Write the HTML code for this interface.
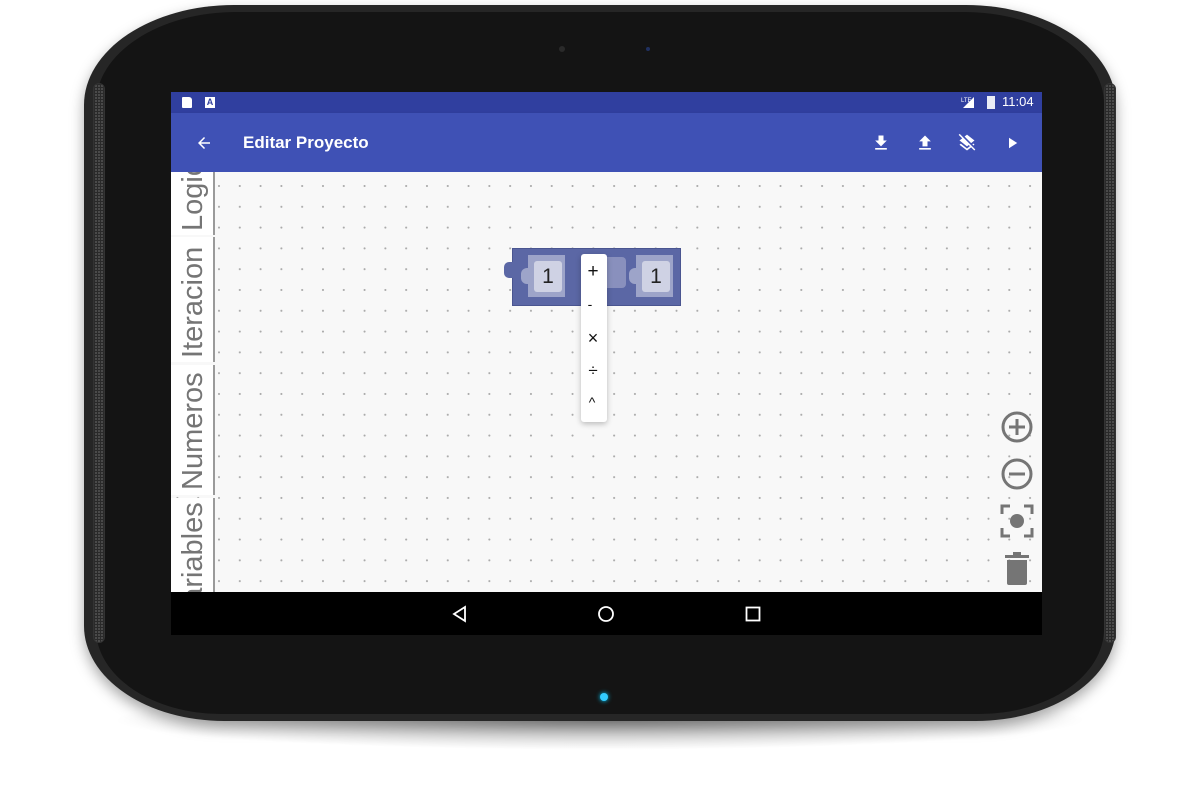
<!DOCTYPE html>
<html><head><meta charset="utf-8"><style>
*{margin:0;padding:0;box-sizing:border-box}
body{width:1200px;height:797px;background:#fff;position:relative;overflow:hidden;font-family:"Liberation Sans",sans-serif}
.abs{position:absolute}
.shadow{left:110px;top:690px;width:980px;height:60px;border-radius:50%;background:radial-gradient(ellipse at center,rgba(0,0,0,.35),rgba(0,0,0,0) 70%)}
.outer{left:84px;top:5px;width:1032px;height:716px;border-radius:150px 150px 140px 140px/100px 100px 95px 95px;background:#262626;box-shadow:0 6px 14px rgba(0,0,0,.35)}
.inner{left:96px;top:12px;width:1008px;height:702px;border-radius:140px 140px 125px 125px/92px 92px 85px 85px;background:#141414}
.spk{width:12px;top:83px;height:560px;border-radius:6px;background:repeating-radial-gradient(circle at 2px 2px,#555 0 1px,#2a2a2a 1px 3px);background-size:3px 3px;border:1px solid #333}
.screen{left:171px;top:92px;width:871px;height:543px;background:#000;overflow:hidden}
.status{left:0;top:0;width:871px;height:21px;background:#303f9f}
.bar{left:0;top:21px;width:871px;height:59px;background:#3f51b5;box-shadow:0 2px 3px rgba(0,0,0,.25)}
.canvas{left:0;top:80px;width:871px;height:420px;background-color:#f8f8f8;background-image:radial-gradient(circle,#aaa 0.8px,transparent 1.2px);background-size:20.8px 20.8px;background-position:37.6px 3.6px;overflow:hidden}
.tab{left:0;width:44px;background:#fff;border-right:2px solid #9a9a9a;overflow:hidden}
.tab span{position:absolute;left:7px;transform-origin:0 0;transform:rotate(-90deg);font-size:29px;line-height:30px;color:#757575;white-space:nowrap}
.nav{left:0;top:500px;width:871px;height:43px;background:#000}
</style></head><body>
<div class="abs shadow"></div>
<div class="abs outer"></div>
<div class="abs inner"></div>
<div class="abs spk" style="left:93px"></div>
<div class="abs spk" style="left:1104px"></div>
<div class="abs" style="left:559px;top:46px;width:6px;height:6px;border-radius:50%;background:#2a2a2a"></div>
<div class="abs" style="left:646px;top:47px;width:4px;height:4px;border-radius:50%;background:#203060"></div>
<div class="abs" style="left:600px;top:693px;width:8px;height:8px;border-radius:50%;background:#3cf;box-shadow:0 0 5px #0cf"></div>

<div class="abs screen">
 <div class="abs status">
  <div class="abs" style="left:11px;top:5px;width:10px;height:11px;background:#fff;border-radius:1px 3px 1px 1px"></div>
  <div class="abs" style="left:34px;top:5px;width:10px;height:11px;background:#fff;color:#303f9f;font-size:9px;font-weight:bold;text-align:center;line-height:11px">A</div>
  <svg class="abs" style="left:790px;top:4px" width="14" height="13"><polygon points="2,12 13,12 13,1" fill="#fff"/><text x="0" y="6" font-size="6" fill="#fff" font-family="Liberation Sans">LTE</text></svg>
  <div class="abs" style="left:816px;top:4px;width:8px;height:13px;background:#fff;opacity:.9"></div>
  <div class="abs" style="left:831px;top:2px;color:#fff;font-size:13px">11:04</div>
 </div>
 <div class="abs bar">
  <svg class="abs" style="left:24px;top:21px" width="18" height="18" viewBox="0 0 24 24"><path d="M20 11H7.83l5.59-5.59L12 4l-8 8 8 8 1.41-1.41L7.83 13H20v-2z" fill="#fff"/></svg>
  <div class="abs" style="left:72px;top:20px;color:#fff;font-size:17px;font-weight:bold">Editar Proyecto</div>
  <svg class="abs" style="left:700px;top:20px" width="20" height="20" viewBox="0 0 24 24"><path d="M19 9h-4V3H9v6H5l7 7 7-7zM5 18v2h14v-2H5z" fill="#fff"/></svg>
  <svg class="abs" style="left:744px;top:20px" width="20" height="20" viewBox="0 0 24 24"><path d="M9 16h6v-6h4l-7-7-7 7h4zm-4 2h14v2H5z" fill="#fff"/></svg>
  <svg class="abs" style="left:786px;top:20px" width="20" height="20" viewBox="0 0 24 24"><path d="M19.81 14.99l1.19-.92-1.43-1.43-1.19.92 1.43 1.43zm-.45-4.72L21 9l-9-7-2.91 2.27 7.870 7.88 2.4-1.88zM3.27 1L2 2.27l4.22 4.22L3 9l1.63 1.27L12 16l2.1-1.630 1.43 1.43L12 18.54l-7.37-5.73L3 14.07l9 7 4.95-3.85L20.73 21 22 19.73 3.27 1z" fill="#fff"/></svg>
  <svg class="abs" style="left:832px;top:21px" width="18" height="18" viewBox="0 0 24 24"><path d="M8 5v14l11-7z" fill="#fff"/></svg>
 </div>
 <div class="abs canvas">
  <div class="abs tab" style="top:-60px;height:123px"><span style="top:119px">Logica</span></div>
  <div class="abs tab" style="top:65px;height:125px"><span style="top:121px">Iteracion</span></div>
  <div class="abs tab" style="top:193px;height:130px"><span style="top:125px">Numeros</span></div>
  <div class="abs tab" style="top:326px;height:110px"><span style="top:123px">Variables</span></div>
  <!-- block -->
  <div class="abs" style="left:341px;top:76px;width:169px;height:58px;background:#5b67a5;border:1px solid #4a5590"></div>
  <div class="abs" style="left:333px;top:90px;width:10px;height:16px;background:#5b67a5;border-radius:5px 0 0 5px"></div>
  <div class="abs" style="left:357px;top:83px;width:37px;height:42px;background:#9da4c9"></div>
  <div class="abs" style="left:363px;top:89px;width:28px;height:31px;background:#cfd2e4;border-radius:3px;font-size:21px;text-align:center;line-height:31px;color:#222">1</div>
  <div class="abs" style="left:350px;top:96px;width:10px;height:16px;background:#9da4c9;border-radius:6px 0 0 6px"></div>
  <div class="abs" style="left:430px;top:85px;width:25px;height:31px;background:#8990bd;border-radius:4px"></div>
  <div class="abs" style="left:465px;top:83px;width:37px;height:42px;background:#9da4c9"></div>
  <div class="abs" style="left:471px;top:89px;width:28px;height:31px;background:#cfd2e4;border-radius:3px;font-size:21px;text-align:center;line-height:31px;color:#222">1</div>
  <div class="abs" style="left:458px;top:96px;width:10px;height:16px;background:#9da4c9;border-radius:6px 0 0 6px"></div>
  <!-- menu -->
  <div class="abs" style="left:410px;top:82px;width:26px;height:168px;background:#fff;border-radius:3px;box-shadow:0 2px 6px rgba(0,0,0,.25);color:#111;text-align:center">
   <div class="abs" style="left:0;top:7px;width:24px;font-size:19px">+</div>
   <div class="abs" style="left:0;top:42px;width:18px;font-size:14px">-</div>
   <div class="abs" style="left:0;top:74px;width:24px;font-size:18px">×</div>
   <div class="abs" style="left:0;top:107px;width:24px;font-size:17px">÷</div>
   <div class="abs" style="left:0;top:140px;width:22px;font-size:14px">^</div>
  </div>
  <!-- right controls -->
  <svg class="abs" style="left:829px;top:238px" width="34" height="34" viewBox="0 0 34 34"><circle cx="17" cy="17" r="14" fill="none" stroke="#757575" stroke-width="3"/><path d="M17 9v16M9 17h16" stroke="#757575" stroke-width="3"/></svg>
  <svg class="abs" style="left:829px;top:285px" width="34" height="34" viewBox="0 0 34 34"><circle cx="17" cy="17" r="14" fill="none" stroke="#757575" stroke-width="3"/><path d="M9 17h16" stroke="#757575" stroke-width="3"/></svg>
  <svg class="abs" style="left:829px;top:332px" width="34" height="34" viewBox="0 0 34 34"><path d="M2 10V2h8M24 2h8v8M32 24v8h-8M10 32H2v-8" fill="none" stroke="#757575" stroke-width="3"/><circle cx="17" cy="17" r="7" fill="#757575"/></svg>
  <svg class="abs" style="left:833px;top:380px" width="26" height="34" viewBox="0 0 26 34"><rect x="1" y="3" width="24" height="3" fill="#757575"/><rect x="9" y="0" width="8" height="3" fill="#757575"/><path d="M3 8h20v23a2 2 0 0 1-2 2H5a2 2 0 0 1-2-2z" fill="#757575"/></svg>
 </div>
 <div class="abs nav">
  <svg class="abs" style="left:280px;top:13px" width="18" height="18" viewBox="0 0 18 18"><path d="M14 2L3 9l11 7z" fill="none" stroke="#fff" stroke-width="1.8"/></svg>
  <svg class="abs" style="left:426px;top:13px" width="18" height="18" viewBox="0 0 18 18"><circle cx="9" cy="9" r="7" fill="none" stroke="#fff" stroke-width="1.8"/></svg>
  <svg class="abs" style="left:574px;top:14px" width="16" height="16" viewBox="0 0 16 16"><rect x="1.5" y="1.5" width="13" height="13" fill="none" stroke="#fff" stroke-width="1.8"/></svg>
 </div>
</div>
</body></html>
